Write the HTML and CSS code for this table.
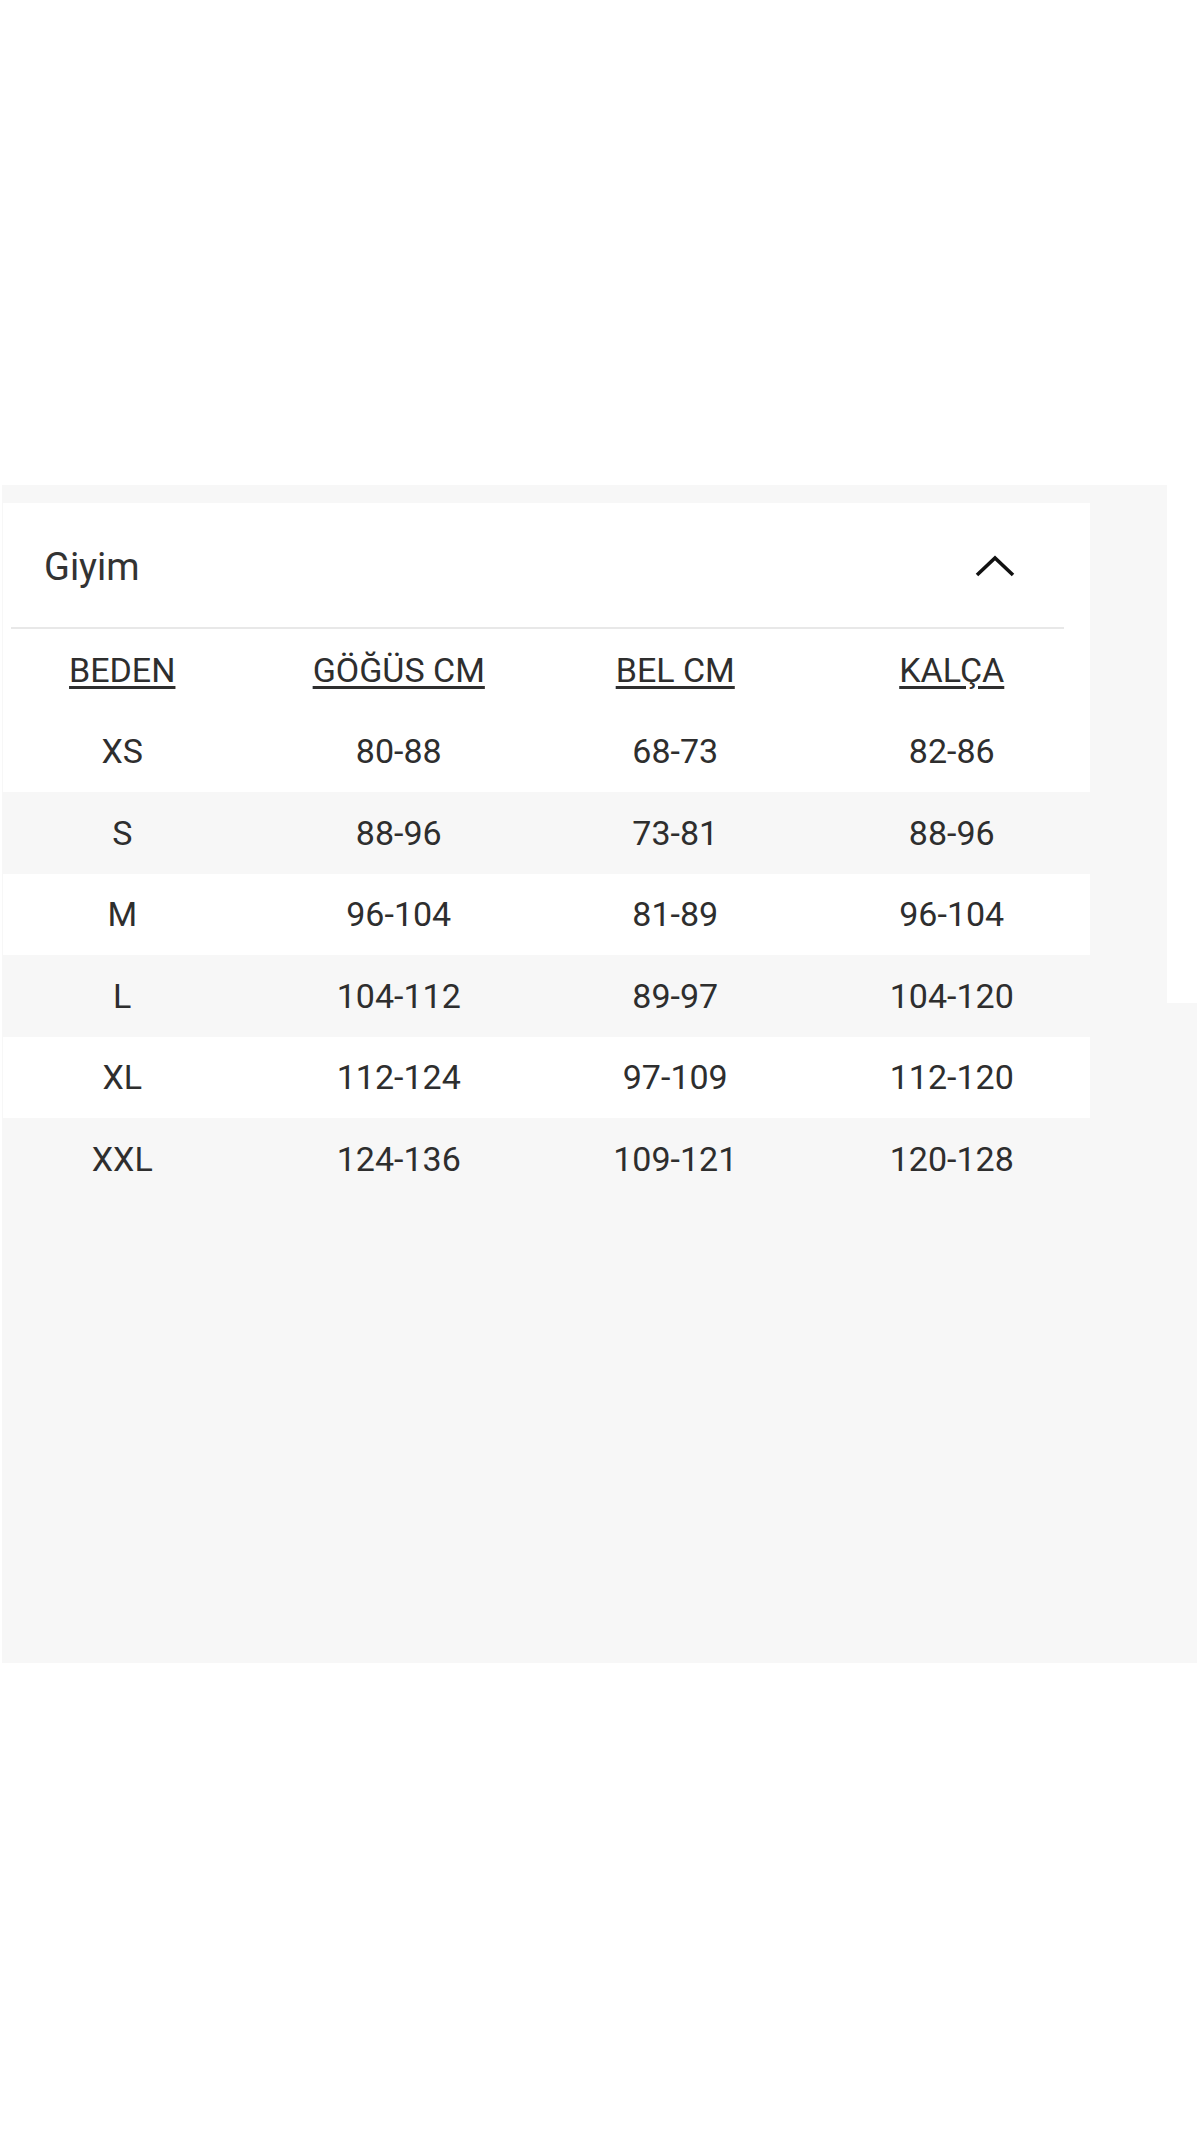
FILE: index.html
```html
<!DOCTYPE html>
<html lang="tr">
<head>
    <meta charset="UTF-8">
    <meta name="viewport" content="width=device-width, initial-scale=1.0">
    <link rel="stylesheet" href="styles.css">
    <title>Beden Tablosu</title>
</head>
<body>

<div class="size-panel">
    <div class="size-card">
        <div class="size-card-header">
            <span class="size-card-title">Giyim</span>
            <svg class="chevron" width="40" height="22" viewBox="0 0 40 22">
                <polyline points="2,20 20,3 38,20" fill="none" stroke="#111" stroke-width="3.6"/>
            </svg>
        </div>
        <div class="size-divider"></div>

        <div class="size-table">
            <div class="size-row size-row-head">
                <span>BEDEN</span>
                <span>GÖĞÜS CM</span>
                <span>BEL CM</span>
                <span>KALÇA</span>
            </div>
            <div class="size-row">
                <span>XS</span><span>80-88</span><span>68-73</span><span>82-86</span>
            </div>
            <div class="size-row alt">
                <span>S</span><span>88-96</span><span>73-81</span><span>88-96</span>
            </div>
            <div class="size-row">
                <span>M</span><span>96-104</span><span>81-89</span><span>96-104</span>
            </div>
            <div class="size-row alt">
                <span>L</span><span>104-112</span><span>89-97</span><span>104-120</span>
            </div>
            <div class="size-row">
                <span>XL</span><span>112-124</span><span>97-109</span><span>112-120</span>
            </div>
            <div class="size-row alt">
                <span>XXL</span><span>124-136</span><span>109-121</span><span>120-128</span>
            </div>
        </div>
    </div>
</div>

</body>
</html>
```

FILE: styles.css
```css
body {
    margin: 0;
    padding: 0;
    background: #fff;
    font-family: Roboto, "Liberation Sans", sans-serif;
    color: #2e2e2e;
}

.size-panel {
    margin: 485px 0 0 2px;
    width: 1195px;
    height: 1178px;
    padding-top: 18px;
    box-sizing: border-box;
    background: linear-gradient(#fff, #fff) right top / 30px 518px no-repeat, #f7f7f7;
}

.size-card {
    margin-left: 1px;
    width: 1087px;
    background: #fff;
    overflow: hidden;
}

.size-card-header {
    height: 124px;
    display: flex;
    align-items: center;
    justify-content: space-between;
    padding: 0 75px 0 41px;
}

.size-card-title {
    font-size: 38px;
    color: #333;
    padding-top: 3px;
}

.chevron {
    display: block;
    margin-top: 2px;
}

.size-divider {
    height: 2px;
    margin: 0 26px 0 8px;
    background: #e8e8e8;
}

.size-table {
    width: 1106px;
    margin-left: -19px;
}

.size-row {
    display: grid;
    grid-template-columns: repeat(4, 1fr);
    align-items: center;
    height: 81.5px;
    font-size: 34px;
    text-align: center;
}

.size-row.alt {
    background: #f7f7f7;
}

.size-row-head span {
    text-decoration: underline;
    text-underline-offset: 4px;
}
```
